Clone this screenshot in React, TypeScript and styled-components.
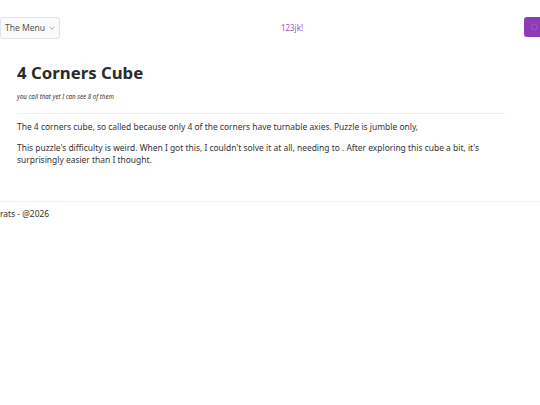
import React from 'react'
import styled, { createGlobalStyle } from 'styled-components'

const GlobalStyle = createGlobalStyle`
  html, body {
    margin: 0;
    padding: 0;
    background: #fff;
    font-family: "Noto Sans", "Open Sans", sans-serif;
    color: #333;
  }
`

const NavBar = styled.nav`
  display: flex;
  align-items: center;
  justify-content: space-between;
  height: 54px;
`

const MenuButton = styled.button`
  display: flex;
  align-items: center;
  gap: 4px;
  height: 22px;
  padding: 0 4px;
  margin-top: 1px;
  border: 1px solid #e2e4e8;
  border-radius: 3px;
  background: #fafbfc;
  color: #555;
  font-family: inherit;
  font-size: 8.5px;
`

const Brand = styled.span`
  color: #a24fc4;
  font-size: 8px;
`

const AvatarBox = styled.div`
  width: 20px;
  height: 20px;
  margin-right: -4px;
  border-radius: 3px;
  background: #8f3bb8;
  display: flex;
  align-items: center;
  justify-content: center;
`

const Main = styled.main`
  padding: 8px 17px 26px 17px;
  border-bottom: 1px solid #f3f3f3;
`

const Title = styled.h1`
  margin: 0;
  font-size: 16.8px;
  font-weight: 700;
  color: #2b2b2b;
  line-height: 1.3;
`

const Subtitle = styled.p`
  margin: 8px 0 0;
  font-size: 6.2px;
  font-style: italic;
  color: #333;
`

const Divider = styled.hr`
  border: 0;
  border-top: 1px solid #f0f0f0;
  margin: 12px 18px 7px 0;
`

const Para = styled.p`
  margin: 0 0 9px;
  font-size: 8.45px;
  line-height: 12px;
  color: #333;
`

const Footer = styled.footer`
  padding: 6px 0;
  font-size: 8.45px;
  color: #333;
`

export default function App() {
  return (
    <>
      <GlobalStyle />
      <NavBar>
        <MenuButton>
          The Menu
          <svg width="6" height="4" viewBox="0 0 6 4">
            <path d="M0.5 0.8 L3 3.2 L5.5 0.8" fill="none" stroke="#999" strokeWidth="0.8" />
          </svg>
        </MenuButton>
        <Brand>123jk!</Brand>
        <AvatarBox>
          <svg width="8" height="8" viewBox="0 0 8 8">
            <circle cx="4" cy="4" r="3" fill="none" stroke="#9d54c2" strokeWidth="1" />
          </svg>
        </AvatarBox>
      </NavBar>
      <Main>
        <Title>4 Corners Cube</Title>
        <Subtitle>you call that yet I can see 8 of them</Subtitle>
        <Divider />
        <Para>The 4 corners cube, so called because only 4 of the corners have turnable axies. Puzzle is jumble only,</Para>
        <Para>
          This puzzle's difficulty is weird. When I got this, I couldn't solve it at all, needing to . After exploring this cube a bit, it's surprisingly easier than I thought.
        </Para>
      </Main>
      <Footer>rats - @2026</Footer>
    </>
  )
}
